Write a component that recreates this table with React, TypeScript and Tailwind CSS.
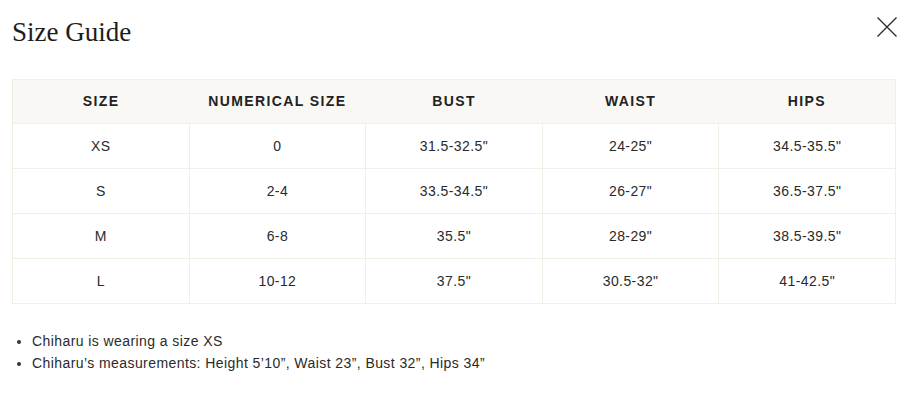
import React from "react";

const rows = [
  ["XS", "0", "31.5-32.5\"", "24-25\"", "34.5-35.5\""],
  ["S", "2-4", "33.5-34.5\"", "26-27\"", "36.5-37.5\""],
  ["M", "6-8", "35.5\"", "28-29\"", "38.5-39.5\""],
  ["L", "10-12", "37.5\"", "30.5-32\"", "41-42.5\""],
];
const heads = ["SIZE", "NUMERICAL SIZE", "BUST", "WAIST", "HIPS"];

export default function App() {
  return (
    <div className="w-[920px] h-[420px] bg-white text-[#222222] font-['Liberation_Sans',Arial,sans-serif]">
      <div className="flex items-start justify-between pl-[12px] pr-[23px] pt-[14px]">
        <h1 className="font-['Liberation_Serif','Times_New_Roman',serif] text-[27px] leading-[36px] text-[#1d1d1d]">
          Size Guide
        </h1>
        <button className="mt-[3px] w-[20px] h-[20px]" aria-label="Close">
          <svg width="20" height="20" viewBox="0 0 20 20" fill="none" stroke="#2a2a2a" strokeWidth="1.3">
            <path d="M0.5 0.5 L19.5 19.5 M19.5 0.5 L0.5 19.5" />
          </svg>
        </button>
      </div>
      <div className="mt-[29px] px-[12px]">
        <table className="w-[884px] table-fixed border-collapse border border-[#f1eee5]">
          <thead>
            <tr className="bg-[#faf8f4] h-[44px]">
              {heads.map((h) => (
                <th key={h} className="text-[14px] font-bold tracking-[0.1em] text-center align-middle text-[#222]">
                  {h}
                </th>
              ))}
            </tr>
          </thead>
          <tbody>
            {rows.map((r) => (
              <tr key={r[0]} className="h-[45px]">
                {r.map((c, i) => (
                  <td key={i} className="border border-[#f1eee5] text-center align-middle text-[14px] tracking-[0.03em] text-[#2a2a2a]">
                    {c}
                  </td>
                ))}
              </tr>
            ))}
          </tbody>
        </table>
      </div>
      <ul className="mt-[26px] pl-[32px] list-disc text-[14px] leading-[22px] tracking-[0.03em] text-[#2a2a2a] marker:text-[#333]">
        <li className="pl-0">Chiharu is wearing a size XS</li>
        <li>Chiharu’s measurements: Height 5’10”, Waist 23”, Bust 32”, Hips 34”</li>
      </ul>
    </div>
  );
}
